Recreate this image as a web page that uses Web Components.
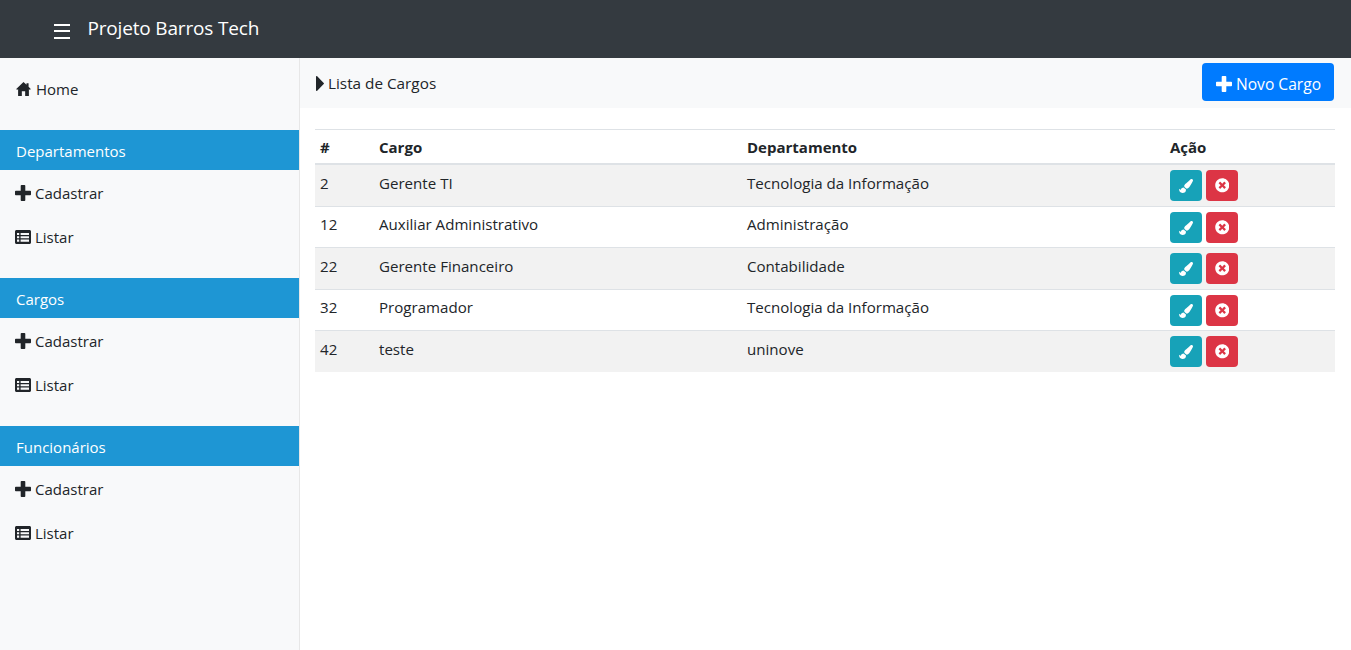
<!DOCTYPE html>
<html lang="pt-BR">
<head>
<meta charset="utf-8">
<title>Projeto Barros Tech</title>
<style>
html,body{margin:0;padding:0;height:100%;background:#fff}
body{font-family:"Open Sans","Noto Sans",sans-serif;font-size:15px;color:#212529;overflow:hidden}
</style>
</head>
<body>
<app-shell>
  <app-navbar slot="top" title="Projeto Barros Tech"></app-navbar>
  <side-bar slot="side">
    <side-item icon="home" label="Home"></side-item>
    <side-group label="Departamentos"></side-group>
    <side-group label="Cargos"></side-group>
    <side-group label="Funcionários"></side-group>
  </side-bar>
  <page-head slot="main" title="Lista de Cargos" action="Novo Cargo"></page-head>
  <data-table slot="main"></data-table>
</app-shell>
<script>
/* name: [viewBox w, viewBox h, path, rendered w, rendered h] */
const ICONS={
home:[14,13.5,"M7 0 9.9 2.7V1.2H11.9V4.6L14 6.7 13.2 7.6 12.2 6.7V13.5H8.6V9H5.4V13.5H1.8V6.7L.8 7.6 0 6.7Z",15,14],
plus:[16,16,"M5.7.8C5.7.4 6.1 0 6.5 0H9.5C9.9 0 10.3.4 10.3.8V5.7H15.2C15.6 5.7 16 6.1 16 6.5V9.5C16 9.9 15.6 10.3 15.2 10.3H10.3V15.2C10.3 15.6 9.9 16 9.5 16H6.5C6.1 16 5.7 15.6 5.7 15.2V10.3H.8C.4 10.3 0 9.9 0 9.5V6.5C0 6.1.4 5.7.8 5.7H5.7Z",16,16],
table:[16,14,"M1.5 0H14.5C15.3 0 16 .7 16 1.5V12.5C16 13.3 15.3 14 14.5 14H1.5C.7 14 0 13.3 0 12.5V1.5C0 .7.7 0 1.5 0ZM2 3V5H4.2V3ZM5.6 3V5H14V3ZM2 6.2V8.2H4.2V6.2ZM5.6 6.2V8.2H14V6.2ZM2 9.4V11.8H4.2V9.4ZM5.6 9.4V11.8H14V9.4Z",16,14],
caret:[8,15,"M0 .8C0 .1.7-.2 1.2.3L7.7 6.9C8.1 7.2 8.1 7.8 7.7 8.1L1.2 14.7C.7 15.2 0 14.9 0 14.2Z",8,15],
times:[512,512,"M256 8C119 8 8 119 8 256s111 248 248 248 248-111 248-248S393 8 256 8zm121.6 313.1c4.7 4.7 4.7 12.3 0 17L338 377.6c-4.7 4.7-12.3 4.7-17 0L256 312l-65.1 65.6c-4.7 4.7-12.3 4.7-17 0L134.4 338c-4.7-4.7-4.7-12.3 0-17l65.6-65-65.6-65.1c-4.7-4.7-4.7-12.3 0-17l39.6-39.6c4.7-4.7 12.3-4.7 17 0l65 65.7 65.1-65.6c4.7-4.7 12.3-4.7 17 0l39.6 39.6c4.7 4.7 4.7 12.3 0 17L312 256l65.6 65.1z",14.5,14.5],
brush:[512,512,"M167.02 309.34c-40.12 2.58-76.53 17.86-97.19 72.3-2.35 6.21-8 9.98-14.59 9.98-11.11 0-45.46-27.67-55.25-34.35C0 439.62 37.93 512 128 512c75.86 0 128-43.77 128-120.19 0-3.11-.65-6.08-.97-9.13l-88.01-73.34zM457.89 0c-15.16 0-29.37 6.71-40.21 16.45C213.27 199.05 192 203.34 192 257.09c0 13.7 3.25 26.76 8.73 38.7l63.82 53.18c7.21 1.8 14.64 3.03 22.39 3.03 62.11 0 98.11-45.47 211.16-256.46 7.38-14.35 13.9-29.85 13.9-45.99C512 20.64 486 0 457.89 0z",14,14]
};
function el(cls,tpl){customElements.define(cls,class extends HTMLElement{constructor(){super();this.attachShadow({mode:'open'});}connectedCallback(){this.shadowRoot.innerHTML=tpl(this);}});}

el('fa-icon',h=>{const[vw,vh,d,w,ht]=ICONS[h.getAttribute('name')];
return `<style>:host{display:inline-flex;align-items:center;justify-content:center;flex:none;color:inherit}svg{display:block;fill:currentColor;fill-rule:evenodd}</style><svg width="${w}" height="${ht}" viewBox="0 0 ${vw} ${vh}" aria-hidden="true"><path d="${d}"/></svg>`;});

el('app-shell',()=>`<style>:host{display:grid;grid-template-columns:300px 1fr;grid-template-rows:58px 592px;height:650px;width:1351px}
.t{grid-column:1/3;display:block}.s{display:block}.m{display:flex;flex-direction:column;min-width:0}</style>
<div class="t"><slot name="top"></slot></div><div class="s"><slot name="side"></slot></div><div class="m"><slot name="main"></slot></div>`);

el('app-navbar',h=>`<style>:host{display:flex;align-items:center;height:58px;background:#343a40;color:#fff;box-sizing:border-box;padding:0 0 2px 54px}
.b{display:flex;flex-direction:column;gap:4.5px;width:16px;margin-top:6px}.b i{display:block;height:2px;background:#fff}
.n{font-size:19px;margin-left:17.5px;letter-spacing:-.17px;line-height:28px}</style>
<div class="b"><i></i><i></i><i></i></div><span class="n">${h.getAttribute('title')}</span>`);

el('side-bar',()=>`<style>:host{display:block;height:592px;background:#f8f9fa;border-right:1px solid #e7e7e7;box-sizing:border-box;padding-top:9px}</style><slot></slot>`);

el('side-item',h=>`<style>:host{display:flex;align-items:center;height:44px;padding-left:15px;font-size:15px;color:#212529;gap:4px}
:host([icon=home]){gap:5px}
fa-icon{width:16px}</style><fa-icon name="${h.getAttribute('icon')}"></fa-icon><span>${h.getAttribute('label')}</span>`);

el('side-group',h=>`<style>:host{display:block;margin-top:19px}
.h{height:40px;box-sizing:border-box;padding:2px 0 0 16px;background:#1e96d4;color:#fff;display:flex;align-items:center;font-size:15px;margin-bottom:1px}</style><div class="h">${h.getAttribute('label')}</div>
<side-item icon="plus" label="Cadastrar"></side-item><side-item icon="table" label="Listar"></side-item>`);

el('page-head',h=>`<style>:host{display:flex;align-items:center;justify-content:space-between;height:50px;background:#f8f9fa;box-sizing:border-box;padding:0 17px 0 16px;font-size:15px}
.l{display:flex;align-items:center;gap:4px;font-size:15.3px}
.btn{display:flex;align-items:center;gap:4px;height:38px;width:132px;margin-bottom:2px;box-sizing:border-box;padding:0 0 0 13px;background:#007bff;color:#fff;border-radius:4px;font-size:15.6px}
.btn span{padding-top:3px;white-space:nowrap}.btn fa-icon{padding-top:3px;width:17px}</style>
<div class="l"><fa-icon name="caret"></fa-icon><span>${h.getAttribute('title')}</span></div>
<div class="btn"><fa-icon name="plus"></fa-icon><span>${h.getAttribute('action')}</span></div>`);

el('act-btn',h=>`<style>:host{display:flex;align-items:center;justify-content:center;width:32px;height:31px;border-radius:4px;color:#fff;background:${h.getAttribute('color')}}</style><fa-icon name="${h.getAttribute('icon')}"></fa-icon>`);

const ROWS=[["2","Gerente TI","Tecnologia da Informação",41,7],["12","Auxiliar Administrativo","Administração",41,6],["22","Gerente Financeiro","Contabilidade",42,7],["32","Programador","Tecnologia da Informação",41,6],["42","teste","uninove",42,7]];
el('data-table',()=>`<style>:host{display:block;padding:21px 16px 0 15px}
table{border-collapse:separate;border-spacing:0;width:1020px;table-layout:fixed;font-size:15.1px;line-height:22px;color:#212529}
th{text-align:left;font-weight:700;font-size:15px;padding:1px 5px 0;height:36px;border-top:1px solid #dee2e6;border-bottom:2px solid #dee2e6;box-sizing:border-box}
td{padding:0 5px;box-sizing:border-box;border-top:1px solid #dee2e6;vertical-align:top}
tbody tr:first-child td{border-top:0}
tbody tr:nth-child(odd){background:#f2f2f2}
td.act{padding-top:5px}
.a{display:flex;gap:4px}</style>
<table><colgroup><col style="width:59px"><col style="width:368px"><col style="width:423px"><col></colgroup>
<thead><tr><th>#</th><th>Cargo</th><th>Departamento</th><th>Ação</th></tr></thead>
<tbody>${ROWS.map(r=>`<tr style="height:${r[3]}px">${[r[0],r[1],r[2]].map(c=>`<td style="padding-top:${r[4]}px">${c}</td>`).join('')}<td class="act"><div class="a"><act-btn color="#17a2b8" icon="brush"></act-btn><act-btn color="#dc3545" icon="times"></act-btn></div></td></tr>`).join('')}</tbody></table>`);
</script>
</body>
</html>
